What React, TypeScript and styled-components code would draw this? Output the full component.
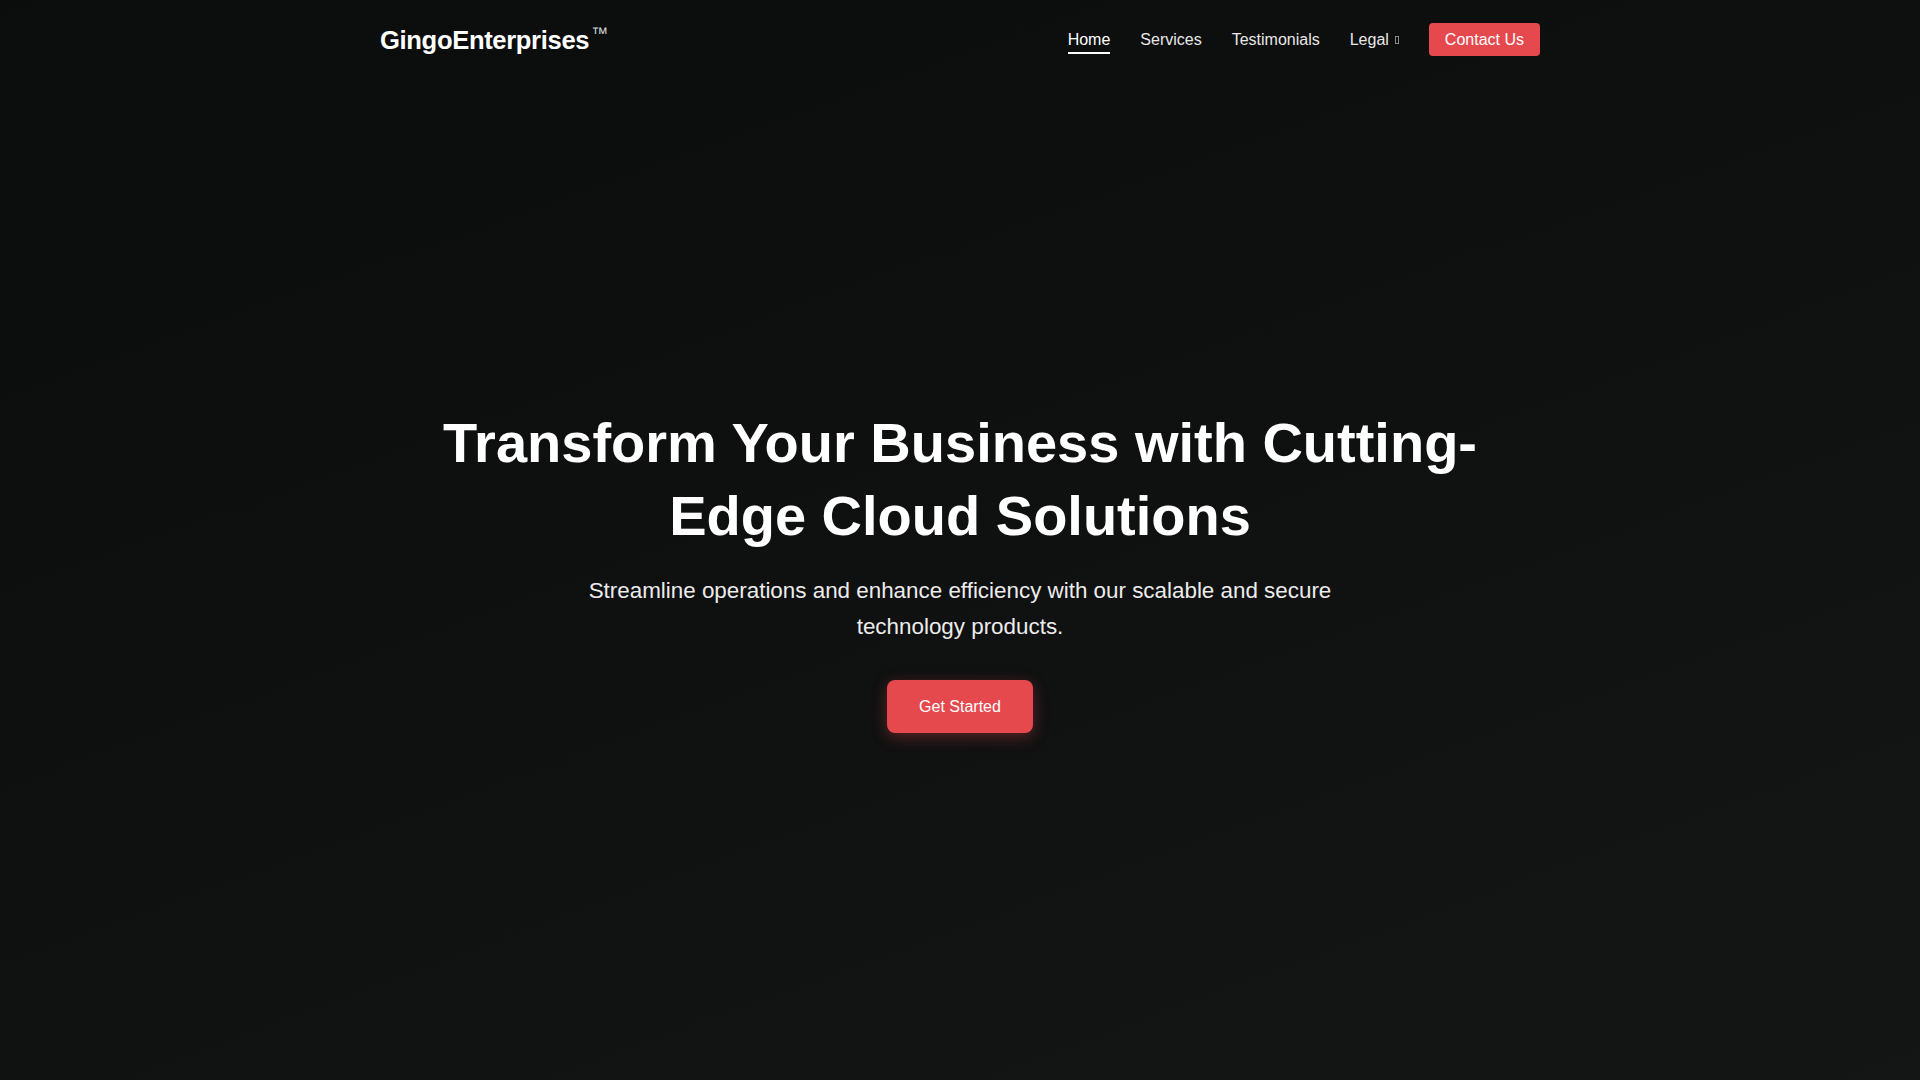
import React from 'react';
import styled, { createGlobalStyle } from 'styled-components';

const GlobalStyle = createGlobalStyle`
  * {
    box-sizing: border-box;
  }

  html, body {
    margin: 0;
    padding: 0;
  }

  body {
    font-family: "Liberation Sans", Arial, Helvetica, sans-serif;
    background: #0f0f0f;
    color: #ffffff;
  }
`;

const NAV_LINKS = ['Home', 'Services', 'Testimonials'];

const App: React.FC = () => {
  return (
    <>
      <GlobalStyle />
      <Page>
        <Header>
          <Container>
            <Logo>
              GingoEnterprises<Trademark>™</Trademark>
            </Logo>
            <Nav>
              {NAV_LINKS.map((link, i) => (
                <NavLink key={link} href="#" active={i === 0}>
                  {link}
                </NavLink>
              ))}
              <NavLink href="#">
                Legal
                {/* icon font never loaded, so the caret shows as a missing-glyph box */}
                <MissingGlyph />
              </NavLink>
              <ContactButton href="#">Contact Us</ContactButton>
            </Nav>
          </Container>
        </Header>

        <Hero>
          <HeroTitle>Transform Your Business with Cutting-Edge Cloud Solutions</HeroTitle>
          <HeroText>
            Streamline operations and enhance efficiency with our scalable and secure technology products.
          </HeroText>
          <CtaButton href="#">Get Started</CtaButton>
        </Hero>
      </Page>
    </>
  );
};

export default App;

const Page = styled.div`
  min-height: 100vh;
  display: flex;
  flex-direction: column;
  background: linear-gradient(160deg, #0b0c0c 0%, #0f1010 50%, #141515 100%);
`;

const Header = styled.header`
  padding: 23px 0;
`;

const Container = styled.div`
  width: 1160px;
  margin: 0 auto;
  display: flex;
  align-items: center;
  justify-content: space-between;
`;

const Logo = styled.a`
  display: flex;
  align-items: flex-start;
  margin-top: 2px;
  font-size: 25.6px;
  font-weight: 700;
  letter-spacing: -0.35px;
  line-height: 31px;
  color: #ffffff;
  text-decoration: none;
`;

const Trademark = styled.sup`
  font-size: 17px;
  font-weight: 400;
  letter-spacing: 0;
  line-height: 1;
  color: #d6d6d6;
  margin-left: 2px;
  margin-top: 0;
  vertical-align: top;
`;

const Nav = styled.nav`
  display: flex;
  align-items: center;
  gap: 30px;
`;

const NavLink = styled.a<{ active?: boolean }>`
  position: relative;
  display: flex;
  align-items: center;
  font-size: 16px;
  line-height: 18px;
  color: ${({ active }) => (active ? '#ffffff' : '#e8e8e8')};
  text-decoration: none;

  &::after {
    content: '';
    display: ${({ active }) => (active ? 'block' : 'none')};
    position: absolute;
    left: 0;
    right: 0;
    bottom: -5px;
    height: 2px;
    background: #ffffff;
  }
`;

const MissingGlyph = styled.span`
  display: inline-block;
  width: 4px;
  height: 8px;
  margin-left: 6px;
  border: 1px solid #8a8a8a;
`;

const ContactButton = styled.a`
  display: inline-block;
  padding: 8px 16px;
  font-size: 16px;
  line-height: 17px;
  color: #ffffff;
  background: #e5484d;
  border-radius: 4px;
  text-decoration: none;
`;

const Hero = styled.section`
  flex: 1;
  display: flex;
  flex-direction: column;
  align-items: center;
  justify-content: center;
  text-align: center;
  padding: 0 20px 19px;
`;

const HeroTitle = styled.h1`
  max-width: 1160px;
  margin: 0 0 20px;
  font-size: 56px;
  font-weight: 700;
  line-height: 1.3;
  color: #ffffff;
`;

const HeroText = styled.p`
  max-width: 800px;
  margin: 0 0 35px;
  font-size: 22.4px;
  line-height: 1.6;
  color: #ececec;
`;

const CtaButton = styled.a`
  display: inline-block;
  padding: 16px 32px;
  font-size: 16px;
  line-height: 21px;
  color: #ffffff;
  background: #e5484d;
  border-radius: 8px;
  text-decoration: none;
  box-shadow: 0 4px 15px rgba(229, 72, 77, 0.35);
`;
